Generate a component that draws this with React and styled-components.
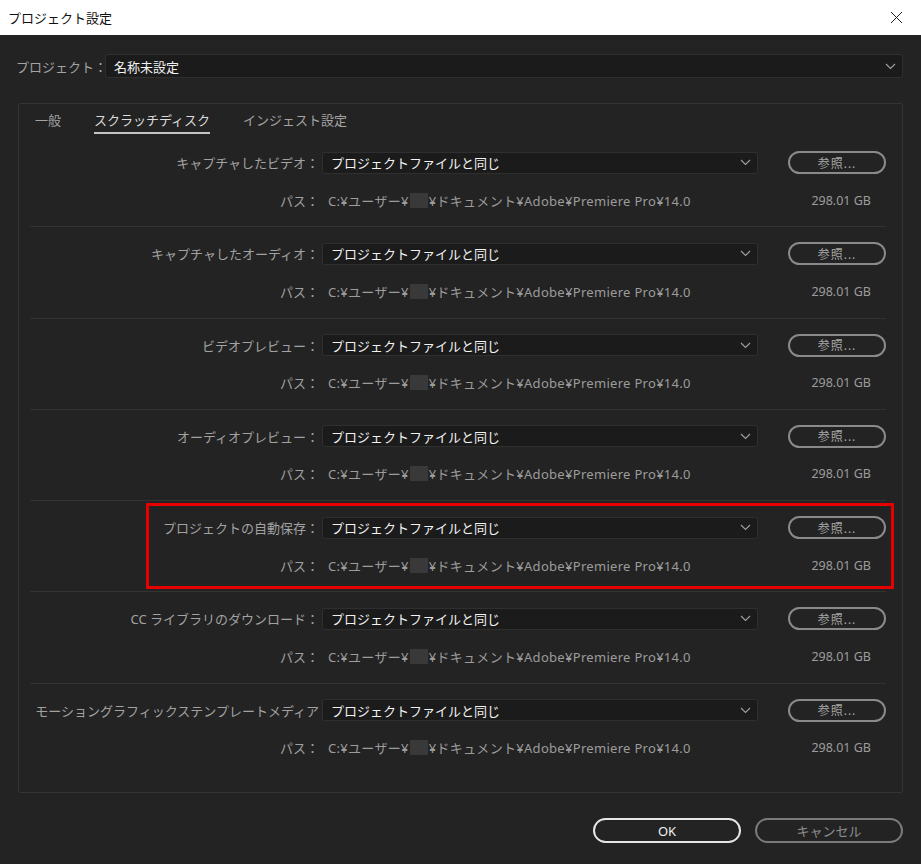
import React from 'react'
import styled, {createGlobalStyle} from 'styled-components'

const GlobalStyle = createGlobalStyle`
  html, body {
    margin: 0;
    padding: 0;
    background: #232323;
  }
  body {
    font-family: "Noto Sans", "Noto Sans CJK JP", sans-serif;
  }
`

const rows = [
  {label: 'キャプチャしたビデオ：'},
  {label: 'キャプチャしたオーディオ：'},
  {label: 'ビデオプレビュー：'},
  {label: 'オーディオプレビュー：'},
  {label: 'プロジェクトの自動保存：', highlight: true},
  {label: 'CC ライブラリのダウンロード：'},
  {label: 'モーショングラフィックステンプレートメディア', last: true},
]

const Chevron = () => (
  <svg width="11" height="7" viewBox="0 0 11 7">
    <path d="M1 1 L5.5 5.5 L10 1" fill="none" stroke="#a0a0a0" strokeWidth="1.1" />
  </svg>
)

const App = () => {
  return (
    <Window>
      <GlobalStyle />
      <TitleBar>
        <Title>プロジェクト設定</Title>
        <CloseIcon width="13" height="13" viewBox="0 0 13 13">
          <path d="M1 1 L12 12 M12 1 L1 12" stroke="#222" strokeWidth="1" />
        </CloseIcon>
      </TitleBar>
      <Body>
        <ProjectRow>
          <ProjectLabel>プロジェクト：</ProjectLabel>
          <Select $big>
            <SelectText>名称未設定</SelectText>
            <Chevron />
          </Select>
        </ProjectRow>
        <Panel>
          <Tabs>
            <Tab>一般</Tab>
            <Tab $active>スクラッチディスク</Tab>
            <Tab>インジェスト設定</Tab>
          </Tabs>
          {rows.map(row => (
            <Row key={row.label} $last={row.last}>
              {row.highlight && <Highlight />}
              <Line>
                <Label>{row.label}</Label>
                <Select>
                  <SelectText>プロジェクトファイルと同じ</SelectText>
                  <Chevron />
                </Select>
                <BrowseButton>参照...</BrowseButton>
              </Line>
              <PathLine>
                <Label>パス：</Label>
                <PathText>
                  C:¥ユーザー¥<Mask />¥ドキュメント¥Adobe¥Premiere Pro¥14.0
                </PathText>
                <Size>298.01 GB</Size>
              </PathLine>
            </Row>
          ))}
        </Panel>
        <Footer>
          <DialogButton $primary>OK</DialogButton>
          <DialogButton>キャンセル</DialogButton>
        </Footer>
      </Body>
    </Window>
  )
}

export default App

const Window = styled.div`
  width: 921px;
  height: 864px;
  display: flex;
  flex-direction: column;
  background: #232323;
  overflow: hidden;
`

const TitleBar = styled.div`
  height: 35px;
  background: #fff;
  display: flex;
  align-items: center;
  justify-content: space-between;
  padding: 0 18px 0 8px;
  flex-shrink: 0;
`

const Title = styled.div`
  font-size: 13px;
  color: #111;
  font-family: "Noto Sans CJK JP", sans-serif;
`

const CloseIcon = styled.svg`
  display: block;
`

const Body = styled.div`
  flex: 1;
  display: flex;
  flex-direction: column;
  padding: 19px 18px 0 18px;
`

const ProjectRow = styled.div`
  display: flex;
  align-items: center;
  margin-left: -2px;
`

const ProjectLabel = styled.div`
  font-size: 13px;
  color: #a4a4a4;
  width: 89px;
  white-space: nowrap;
`

const Select = styled.div`
  flex: ${p => (p.$big ? 1 : 'none')};
  width: ${p => (p.$big ? 'auto' : '436px')};
  height: ${p => (p.$big ? '24px' : '22px')};
  box-sizing: border-box;
  background: #1b1b1b;
  border: 1px solid #2f2f2f;
  border-radius: 2px;
  display: flex;
  align-items: center;
  justify-content: space-between;
  padding: 0 6px 0 8px;
`

const SelectText = styled.span`
  font-size: 13px;
  color: #f2f2f2;
  font-weight: 400;
`

const Panel = styled.div`
  margin-top: 25px;
  height: 690px;
  box-sizing: border-box;
  border: 1px solid #343434;
  border-radius: 2px;
  padding: 0 16px 0 11px;
`

const Tabs = styled.div`
  display: flex;
  height: 32px;
  align-items: flex-start;
  padding-left: 5px;
  gap: 33px;
`

const Tab = styled.div`
  font-size: 13px;
  color: ${p => (p.$active ? '#dcdcdc' : '#a4a4a4')};
  padding-top: 6px;
  height: 22px;
  border-bottom: 2px solid ${p => (p.$active ? '#c4c4c4' : 'transparent')};
`

const Row = styled.div`
  position: relative;
  padding-top: 15px;
  padding-bottom: 18.3px;
  border-bottom: ${p => (p.$last ? 'none' : '1px solid #333')};
`

const Highlight = styled.div`
  position: absolute;
  left: 116px;
  right: -8px;
  top: 2px;
  bottom: 2px;
  border: 3px solid #e60000;
  pointer-events: none;
`

const Line = styled.div`
  display: flex;
  align-items: center;
  height: 23px;
`

const Label = styled.div`
  width: 292px;
  flex-shrink: 0;
  text-align: right;
  font-size: 13px;
  color: #a2a2a2;
  white-space: nowrap;
  padding-right: 3px;
  box-sizing: border-box;
`

const BrowseButton = styled.div`
  margin-left: 30px;
  width: 98px;
  height: 23px;
  box-sizing: border-box;
  border: 2px solid #8a8a8a;
  border-radius: 12px;
  display: flex;
  align-items: center;
  justify-content: center;
  font-size: 12px;
  color: #a6a6a6;
  letter-spacing: 1px;
`

const PathLine = styled.div`
  display: flex;
  align-items: center;
  margin-top: 18px;
  height: 16px;
`

const PathText = styled.div`
  margin-left: 6px;
  flex: 1;
  font-size: 13px;
  letter-spacing: 0.3px;
  color: #9c9c9c;
  display: flex;
  align-items: center;
  white-space: nowrap;
`

const Mask = styled.span`
  display: inline-block;
  width: 18px;
  height: 15px;
  background: #393939;
  margin: 0 1px;
`

const Size = styled.div`
  font-size: 12.5px;
  color: #9c9c9c;
  padding-right: 15px;
`

const Footer = styled.div`
  display: flex;
  justify-content: flex-end;
  gap: 14px;
  margin-top: 25px;
`

const DialogButton = styled.div`
  width: 148px;
  height: 25px;
  box-sizing: border-box;
  border: 2px solid ${p => (p.$primary ? '#e6e6e6' : '#7a7a7a')};
  border-radius: 13px;
  display: flex;
  align-items: center;
  justify-content: center;
  font-size: 13px;
  color: ${p => (p.$primary ? '#f0f0f0' : '#8e8e8e')};
`
